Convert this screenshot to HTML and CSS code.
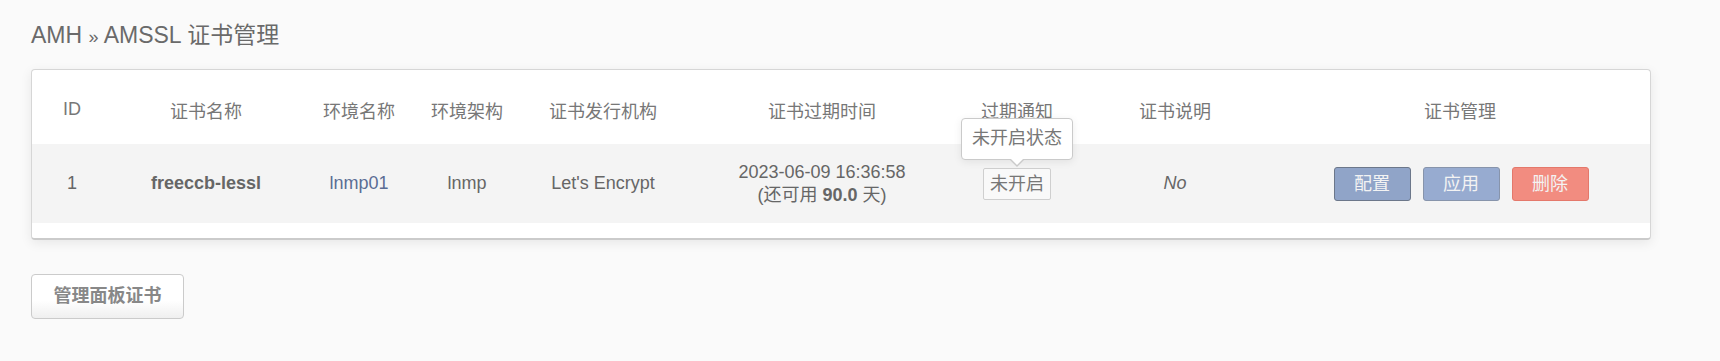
FILE: index.html
```html
<!DOCTYPE html>
<html>
<head lang="zh-CN">
    <meta charset="utf-8">
    <title>AMSSL 证书管理</title>
    <link rel="stylesheet" href="styles.css">
</head>
<body>
<div class="page">
    <h1 class="title">AMH <span class="raquo">»</span> AMSSL 证书管理</h1>

    <div class="card">
        <div class="row head">
            <div class="cell">ID</div>
            <div class="cell">证书名称</div>
            <div class="cell">环境名称</div>
            <div class="cell">环境架构</div>
            <div class="cell">证书发行机构</div>
            <div class="cell">证书过期时间</div>
            <div class="cell">过期通知</div>
            <div class="cell">证书说明</div>
            <div class="cell">证书管理</div>
        </div>
        <div class="row body">
            <div class="cell">1</div>
            <div class="cell"><b>freeccb-lessl</b></div>
            <div class="cell"><a class="link" href="#">lnmp01</a></div>
            <div class="cell">lnmp</div>
            <div class="cell">Let's Encrypt</div>
            <div class="cell date">2023-06-09 16:36:58<br>(还可用 <b>90.0</b> 天)</div>
            <div class="cell">
                <span class="badge">未开启
                    <span class="tip">未开启状态</span>
                </span>
            </div>
            <div class="cell"><i>No</i></div>
            <div class="cell actions">
                <span class="button blue dark">配置</span>
                <span class="button blue">应用</span>
                <span class="button red">删除</span>
            </div>
        </div>
    </div>

    <span class="panel-button">管理面板证书</span>
</div>
</body>
</html>
```

FILE: styles.css
```css
html, body {
    margin: 0;
    padding: 0;
    background: #fafafa;
}

body {
    font-family: "Liberation Sans", Arial, "Noto Sans CJK SC", sans-serif;
    color: #666;
}

.page {
    padding: 20px 0 0 31px;
}

.title {
    margin: 0;
    height: 30px;
    line-height: 30px;
    font-size: 23px;
    font-weight: normal;
    color: #6a6a6a;
}

.raquo {
    font-size: 18px;
}

.card {
    margin-top: 19px;
    width: 1618px;
    background: #fff;
    border: 1px solid #d6d6d6;
    border-bottom: 2px solid #cbcbcb;
    border-radius: 4px;
    padding-bottom: 15px;
    box-shadow: 0 3px 12px rgba(0, 0, 0, 0.08);
}

.row {
    display: grid;
    grid-template-columns: 80px 188px 118px 98px 174px 264px 126px 190px 1fr;
    align-items: center;
    text-align: center;
    font-size: 18px;
}

.row.head {
    height: 74px;
    padding-top: 5px;
    box-sizing: border-box;
    color: #777;
}

.row.body {
    height: 79px;
    background: #f4f4f4;
    color: #666;
}

.date {
    line-height: 23px;
}

.link {
    color: #5b6d94;
    text-decoration: none;
}

.badge {
    position: relative;
    display: inline-block;
    height: 30px;
    line-height: 30px;
    padding: 0 6px;
    border: 1px solid #cfcfcf;
    border-radius: 2px;
    background: #f9f9f9;
    color: #777;
}

.tip {
    position: absolute;
    left: 50%;
    bottom: 39px;
    margin-left: -56px;
    width: 110px;
    height: 40px;
    line-height: 38px;
    background: #fff;
    border: 1px solid #cacaca;
    border-radius: 4px;
    box-shadow: 0 2px 8px rgba(0, 0, 0, 0.08);
    color: #777;
    white-space: nowrap;
}

.tip:before, .tip:after {
    content: "";
    position: absolute;
    left: 50%;
    border: 7px solid transparent;
    border-bottom: 0;
}

.tip:before {
    bottom: -8px;
    margin-left: -7px;
    border-top-color: #cacaca;
}

.tip:after {
    bottom: -6px;
    margin-left: -6px;
    border-width: 6px;
    border-bottom: 0;
    border-top-color: #fff;
}

.actions {
    display: flex;
    justify-content: center;
    gap: 12px;
    padding-left: 2px;
}

.button {
    width: 75px;
    height: 32px;
    line-height: 32px;
    border: 1px solid;
    border-radius: 3px;
    color: #f3f3f3;
    font-size: 18px;
    cursor: pointer;
}

.button.blue {
    background: #97abd0;
    border-color: #8794ab;
}

.button.blue.dark {
    background: #90a4c8;
    border-color: #6c778a;
}

.button.red {
    background: #f28c80;
    border-color: #e4786b;
}

.panel-button {
    display: inline-block;
    margin-top: 34px;
    width: 151px;
    height: 43px;
    line-height: 43px;
    text-align: center;
    border: 1px solid #cbcbcb;
    border-radius: 4px;
    background: linear-gradient(#fff, #fff 60%, #efefef);
    font-size: 18px;
    font-weight: bold;
    color: #888;
    cursor: pointer;
}
```
